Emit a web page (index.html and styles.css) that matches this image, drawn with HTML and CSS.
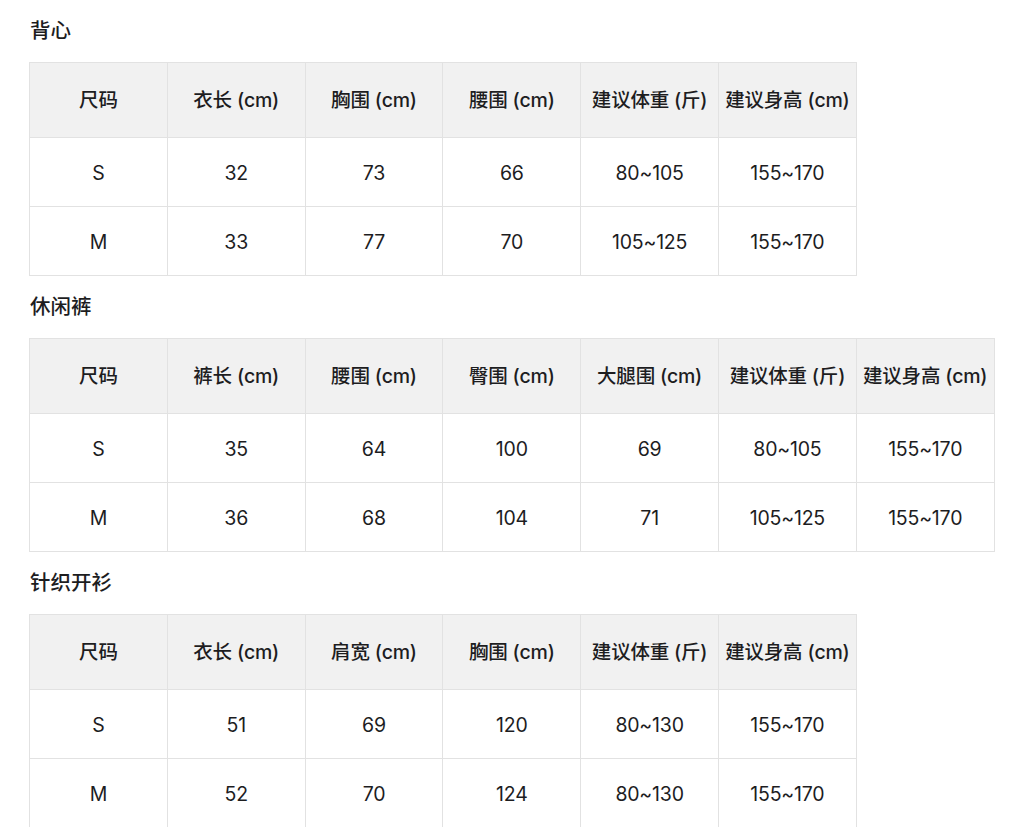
FILE: index.html
```html
<!DOCTYPE html>
<html lang="zh">
<head>
<meta charset="utf-8">
<link rel="stylesheet" href="styles.css">
</head>
<body>
<section class="block">
  <h3 class="title">背心</h3>
  <table class="sizes">
    <thead>
      <tr><th>尺码</th><th>衣长 (cm)</th><th>胸围 (cm)</th><th>腰围 (cm)</th><th>建议体重 (斤)</th><th>建议身高 (cm)</th></tr>
    </thead>
    <tbody>
      <tr><td>S</td><td>32</td><td>73</td><td>66</td><td>80~105</td><td>155~170</td></tr>
      <tr><td>M</td><td>33</td><td>77</td><td>70</td><td>105~125</td><td>155~170</td></tr>
    </tbody>
  </table>
</section>
<section class="block">
  <h3 class="title">休闲裤</h3>
  <table class="sizes">
    <thead>
      <tr><th>尺码</th><th>裤长 (cm)</th><th>腰围 (cm)</th><th>臀围 (cm)</th><th>大腿围 (cm)</th><th>建议体重 (斤)</th><th>建议身高 (cm)</th></tr>
    </thead>
    <tbody>
      <tr><td>S</td><td>35</td><td>64</td><td>100</td><td>69</td><td>80~105</td><td>155~170</td></tr>
      <tr><td>M</td><td>36</td><td>68</td><td>104</td><td>71</td><td>105~125</td><td>155~170</td></tr>
    </tbody>
  </table>
</section>
<section class="block">
  <h3 class="title">针织开衫</h3>
  <table class="sizes">
    <thead>
      <tr><th>尺码</th><th>衣长 (cm)</th><th>肩宽 (cm)</th><th>胸围 (cm)</th><th>建议体重 (斤)</th><th>建议身高 (cm)</th></tr>
    </thead>
    <tbody>
      <tr><td>S</td><td>51</td><td>69</td><td>120</td><td>80~130</td><td>155~170</td></tr>
      <tr><td>M</td><td>52</td><td>70</td><td>124</td><td>80~130</td><td>155~170</td></tr>
    </tbody>
  </table>
</section>
</body>
</html>
```

FILE: styles.css
```css
html, body {
  margin: 0;
  padding: 0;
  background: #ffffff;
}
body {
  padding: 0 29px;
  font-family: "Inter", "Noto Sans CJK SC", sans-serif;
  color: #1d1d1f;
}
.block {
  display: flex;
  flex-direction: column;
  align-items: flex-start;
}
.title {
  margin: 0;
  height: 62px;
  box-sizing: border-box;
  padding: 0 0 4px 1px;
  display: flex;
  align-items: center;
  font-size: 20.5px;
  font-weight: 500;
}
.sizes {
  border-collapse: collapse;
  table-layout: fixed;
}
.sizes th,
.sizes td {
  width: 136.8px;
  border: 1px solid #e2e2e2;
  text-align: center;
  padding: 0;
  font-size: 19.5px;
  white-space: nowrap;
  letter-spacing: -0.2px;
}
.sizes th {
  height: 70px;
  padding-bottom: 4px;
  background: #f1f1f1;
  font-weight: 500;
}
.sizes td {
  height: 66px;
  padding-top: 2px;
  font-weight: 400;
}
```
